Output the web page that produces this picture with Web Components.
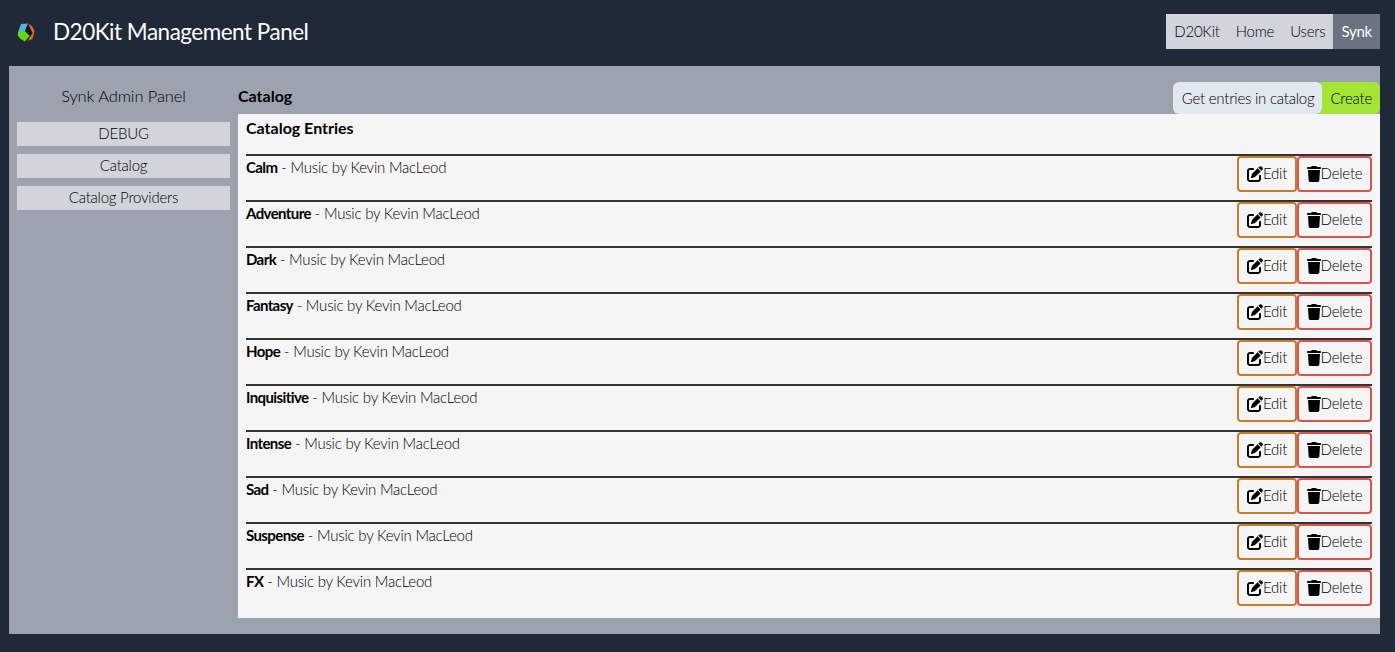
<!DOCTYPE html>
<html>
<head>
<meta charset="utf-8">
<title>D20Kit Management Panel</title>
<style>
  html, body { margin: 0; height: 100%; }
  body {
    background: #1f2937;
    color: #000;
    font-family: Lato, "Open Sans", sans-serif;
    font-size: 15px;
    font-weight: 300;
    letter-spacing: -0.22px;
  }
</style>
</head>
<body>
<app-shell>
  <app-header slot="header" title-text="D20Kit Management Panel">
    <nav-tab>D20Kit</nav-tab>
    <nav-tab>Home</nav-tab>
    <nav-tab>Users</nav-tab>
    <nav-tab active>Synk</nav-tab>
  </app-header>
  <side-menu slot="side" heading="Synk Admin Panel">
    <menu-item>DEBUG</menu-item>
    <menu-item>Catalog</menu-item>
    <menu-item>Catalog Providers</menu-item>
  </side-menu>
  <catalog-view slot="main" heading="Catalog" list-title="Catalog Entries">
    <catalog-entry name="Calm">Music by Kevin MacLeod</catalog-entry>
    <catalog-entry name="Adventure">Music by Kevin MacLeod</catalog-entry>
    <catalog-entry name="Dark">Music by Kevin MacLeod</catalog-entry>
    <catalog-entry name="Fantasy">Music by Kevin MacLeod</catalog-entry>
    <catalog-entry name="Hope">Music by Kevin MacLeod</catalog-entry>
    <catalog-entry name="Inquisitive">Music by Kevin MacLeod</catalog-entry>
    <catalog-entry name="Intense">Music by Kevin MacLeod</catalog-entry>
    <catalog-entry name="Sad">Music by Kevin MacLeod</catalog-entry>
    <catalog-entry name="Suspense">Music by Kevin MacLeod</catalog-entry>
    <catalog-entry name="FX">Music by Kevin MacLeod</catalog-entry>
  </catalog-view>
</app-shell>

<script>
function shadow(el, html) {
  el.attachShadow({ mode: 'open' });
  el.shadowRoot.innerHTML = html;
}

class AppShell extends HTMLElement {
  constructor() {
    super();
    shadow(this, `
      <style>
        :host { display: block; }
        .body {
          background: #9ca3af;
          display: flex;
          height: 568px;
          margin: 0 15px 0 9px;
        }
      </style>
      <slot name="header"></slot>
      <div class="body">
        <slot name="side"></slot>
        <slot name="main"></slot>
      </div>
    `);
  }
}

class AppHeader extends HTMLElement {
  constructor() {
    super();
    shadow(this, `
      <style>
        :host {
          align-items: center;
          display: flex;
          height: 66px;
          padding: 0 15px 0 17px;
        }
        svg { display: block; height: 19px; width: 18px; margin-top: -2px; }
        h1 {
          color: #fff;
          flex: 1;
          font-size: 22.5px;
          font-weight: 400;
          letter-spacing: -0.5px;
          line-height: 30px;
          margin: -2px 0 0 18px;
        }
        nav { display: flex; background: #d1d5db; margin-top: -3px; }
      </style>
      <svg viewBox="0 0 18 19">
        <polygon points="4,1 11,0.5 8,8 1.5,8" fill="#4fb4e6"/>
        <polygon points="11,0.5 15,3 17.5,8 15.5,16 10.5,18 15.5,10" fill="#e8662a"/>
        <polygon points="1.5,8 8,8 13,13 8,18.5 3,15.5 0.5,12" fill="#62d61c"/>
        <polygon points="11,1 15.5,10 13,13 8,8" fill="#15181c"/>
        <polygon points="13,13 15.5,10 10.5,18 8,18.5" fill="#16320f"/>
      </svg>
      <h1></h1>
      <nav><slot></slot></nav>
    `);
    this.shadowRoot.querySelector('h1').textContent = this.getAttribute('title-text');
  }
}

class NavTab extends HTMLElement {
  constructor() {
    super();
    shadow(this, `
      <style>
        :host {
          color: #000;
          display: block;
          line-height: 35px;
          padding: 0 8px;
        }
        :host([active]) { background: #6b7280; color: #fff; font-weight: 400; }
      </style>
      <slot></slot>
    `);
  }
}

class SideMenu extends HTMLElement {
  constructor() {
    super();
    shadow(this, `
      <style>
        :host {
          box-sizing: border-box;
          display: flex;
          flex-direction: column;
          flex: none;
          gap: 8px;
          padding: 16px 8px;
          width: 229px;
        }
        h2 {
          color: #000;
          font-size: 16.5px;
          font-weight: 300;
          letter-spacing: -0.1px;
          line-height: 28px;
          margin: 0 0 4px;
          text-align: center;
        }
      </style>
      <h2></h2>
      <slot></slot>
    `);
    this.shadowRoot.querySelector('h2').textContent = this.getAttribute('heading');
  }
}

class MenuItem extends HTMLElement {
  constructor() {
    super();
    shadow(this, `
      <style>
        :host {
          background: #d1d5db;
          color: #000;
          display: block;
          line-height: 23px;
          height: 24px;
          text-align: center;
        }
      </style>
      <slot></slot>
    `);
  }
}

class CatalogView extends HTMLElement {
  constructor() {
    super();
    shadow(this, `
      <style>
        :host { display: block; flex: 1; min-width: 0; padding-top: 16px; }
        .top { align-items: flex-end; display: flex; height: 32px; }
        h2 {
          flex: 1;
          font-size: 16px;
          font-weight: 700;
          letter-spacing: 0;
          line-height: 28px;
          margin: 0;
          align-self: flex-start;
        }
        .btn { border-radius: 6px; color: #000; line-height: 32px; padding: 0 8px; }
        .get { background: #e2e8f0; padding: 0 8px 0 9px; position: relative; }
        .create { background: #a3e635; margin-left: -6px; padding-left: 14px; }
        .panel { background: #f5f5f5; height: 504px; padding: 0 8px; box-sizing: border-box; }
        h3 {
          font-size: 16px;
          font-weight: 700;
          letter-spacing: 0;
          line-height: 28px;
          margin: 0;
          padding-bottom: 12px;
        }
      </style>
      <div class="top">
        <h2></h2>
        <div class="btn get">Get entries in catalog</div>
        <div class="btn create">Create</div>
      </div>
      <div class="panel">
        <h3></h3>
        <slot></slot>
      </div>
    `);
    this.shadowRoot.querySelector('h2').textContent = this.getAttribute('heading');
    this.shadowRoot.querySelector('h3').textContent = this.getAttribute('list-title');
  }
}

const editIcon = `<svg viewBox="0 0 512 512"><path d="M471.6 21.7c-21.9-21.9-57.3-21.9-79.2 0L362.3 51.7l97.9 97.9 30.1-30.1c21.9-21.9 21.9-57.3 0-79.2L471.6 21.7zm-299.2 220c-6.1 6.1-10.8 13.6-13.5 21.9l-29.6 88.8c-2.9 8.6-.6 18.1 5.8 24.6s15.9 8.7 24.6 5.8l88.8-29.6c8.2-2.7 15.7-7.4 21.9-13.5L437.7 172.3 339.7 74.3 172.4 241.7zM96 64C43 64 0 107 0 160V416c0 53 43 96 96 96H352c53 0 96-43 96-96V320c0-17.7-14.3-32-32-32s-32 14.3-32 32v96c0 17.7-14.3 32-32 32H96c-17.7 0-32-14.3-32-32V160c0-17.7 14.3-32 32-32h96c17.7 0 32-14.3 32-32s-14.3-32-32-32H96z"/></svg>`;
const trashIcon = `<svg viewBox="0 0 448 512"><path d="M135.2 17.7L128 32H32C14.3 32 0 46.3 0 64S14.3 96 32 96H416c17.7 0 32-14.3 32-32s-14.3-32-32-32H320l-7.2-14.3C307.4 6.8 296.3 0 284.2 0H163.8c-12.1 0-23.2 6.8-28.6 17.7zM416 128H32L53.2 467c1.6 25.3 22.6 45 47.9 45H346.9c25.3 0 46.3-19.7 47.9-45L416 128z"/></svg>`;

class CatalogEntry extends HTMLElement {
  constructor() {
    super();
    shadow(this, `
      <style>
        :host {
          border-top: 2px solid #333;
          display: flex;
          height: 44px;
          justify-content: space-between;
        }
        .text { color: #000; line-height: 22px; }
        b { color: #000; font-weight: 700; letter-spacing: -0.6px; }
        .actions { display: flex; height: 36px; }
        .action {
          align-items: center;
          border: 2px solid;
          border-radius: 4px;
          box-sizing: border-box;
          color: #000;
          display: flex;
          justify-content: center;
        }
        .action span { margin-top: -2px; }
        .edit { border-color: #c77d2e; width: 60px; }
        .delete { border-color: #d9534f; width: 75px; }
        svg { display: block; fill: #000; height: 16px; }
      </style>
      <div class="text"><b></b> - <slot></slot></div>
      <div class="actions">
        <div class="action edit">${editIcon}<span>Edit</span></div>
        <div class="action delete">${trashIcon}<span>Delete</span></div>
      </div>
    `);
    this.shadowRoot.querySelector('b').textContent = this.getAttribute('name');
  }
}

customElements.define('app-shell', AppShell);
customElements.define('app-header', AppHeader);
customElements.define('nav-tab', NavTab);
customElements.define('side-menu', SideMenu);
customElements.define('menu-item', MenuItem);
customElements.define('catalog-view', CatalogView);
customElements.define('catalog-entry', CatalogEntry);
</script>
</body>
</html>
